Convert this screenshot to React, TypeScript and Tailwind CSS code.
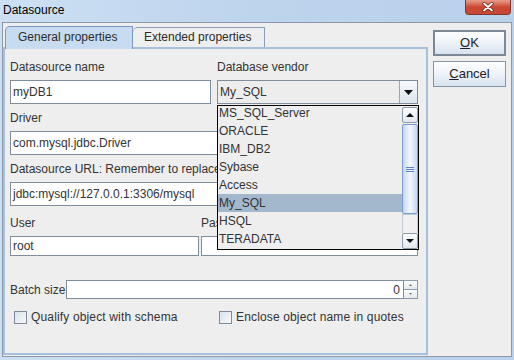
const vendors = [
  "MS_SQL_Server",
  "ORACLE",
  "IBM_DB2",
  "Sybase",
  "Access",
  "My_SQL",
  "HSQL",
  "TERADATA",
];

function Field({ value, h = "h-[24px]", className = "" }: { value: string; h?: string; className?: string }) {
  return (
    <div
      className={`${h} ${className} border border-[#7f8d9c] bg-white pl-[2px] flex items-center overflow-hidden whitespace-nowrap`}
    >
      {value}
    </div>
  );
}

function Label({ children }: { children: React.ReactNode }) {
  return <div className="h-[16px] leading-[16px] mb-[5px] whitespace-nowrap">{children}</div>;
}

function Check({ label }: { label: string }) {
  return (
    <div className="flex items-center gap-[4px]">
      <div className="w-[13px] h-[13px] border border-[#7d8b9a] bg-gradient-to-br from-[#dbe3ec] to-[#f6f8fb]" />
      <span className="tracking-[0.15px]">{label}</span>
    </div>
  );
}

function VendorCombo() {
  return (
    <div className="relative w-[201px]">
      <div className="h-[24px] border border-[#7f8d9c] bg-[#ededed] flex">
        <div className="flex-1 pl-[2px] flex items-center">My_SQL</div>
        <div className="w-[18px] border-l border-[#9aa6b3] bg-gradient-to-b from-[#f7f9fc] to-[#dde5ee] flex items-center justify-center">
          <svg width="9" height="5" viewBox="0 0 9 5">
            <polygon points="0,0 9,0 4.5,5" fill="#111" />
          </svg>
        </div>
      </div>

      {/* open popup list */}
      <div className="absolute left-0 top-[25px] z-20 w-[202px] h-[145px] border border-black bg-[#eeeeee] flex">
        <div className="flex-1 overflow-hidden">
          <div className="-mt-[2px]">
            {vendors.map((v) => (
              <div
                key={v}
                className={`h-[18px] leading-[18px] pl-[1px] ${v === "My_SQL" ? "bg-[#a3b8cc]" : ""}`}
              >
                {v}
              </div>
            ))}
          </div>
        </div>
        <div className="w-[16px] flex flex-col">
          <div className="h-[16px] mt-[1px] border border-[#8e9bab] rounded-[2px] bg-gradient-to-b from-[#fbfcfd] to-[#e3e8ee] flex items-center justify-center">
            <svg width="8" height="4" viewBox="0 0 8 4">
              <polygon points="0,4 8,4 4,0" fill="#111" />
            </svg>
          </div>
          <div className="h-[90px] mt-[1px] border border-[#7b9ad0] rounded-[2px] bg-gradient-to-r from-[#c3d6ef] via-[#f4f8fd] to-[#c6d9f1] flex flex-col items-center justify-center gap-[1px]">
            <div className="w-[8px] h-[1px] bg-[#5b80c4]" />
            <div className="w-[8px] h-[1px] bg-[#5b80c4]" />
            <div className="w-[8px] h-[1px] bg-[#5b80c4]" />
          </div>
          <div className="flex-1 border border-[#c2c9d2] border-b-0 bg-[#f0f0f0]" />
          <div className="h-[16px] border border-[#8e9bab] rounded-[2px] bg-gradient-to-b from-[#fbfcfd] to-[#e3e8ee] flex items-center justify-center">
            <svg width="8" height="4" viewBox="0 0 8 4">
              <polygon points="0,0 8,0 4,4" fill="#111" />
            </svg>
          </div>
        </div>
      </div>
    </div>
  );
}

function DialogButton({ children, focused }: { children: React.ReactNode; focused?: boolean }) {
  return (
    <div
      className={`w-[73px] h-[26px] flex items-center justify-center text-[13px] text-[#222] bg-gradient-to-b from-[#fdfeff] via-[#eef3f9] to-[#d7e2ef] ${
        focused ? "border-2 border-[#7c8896]" : "border border-[#8794a3]"
      }`}
    >
      {children}
    </div>
  );
}

export default function App() {
  return (
    <div className="w-[514px] h-[360px] overflow-hidden flex flex-col bg-gradient-to-r from-[#cde0f3] via-[#bdd4ed] to-[#b9d1eb] font-['Liberation_Sans',Arial,sans-serif] text-[12px] text-[#333333]">
      {/* title bar */}
      <div className="h-[22px] shrink-0 flex items-start justify-between">
        <span className="pl-[3px] pt-[3px] leading-[15px] text-black">Datasource</span>
        <div className="mr-[3px] w-[46px] h-[15px] rounded-b-[4px] border border-t-0 border-[#83362c] bg-gradient-to-b from-[#e79d8c] via-[#cc4732] to-[#c44a35] flex items-center justify-center">
          <svg width="12" height="10" viewBox="0 0 12 10">
            <path d="M2 1.5 L10 8.5 M10 1.5 L2 8.5" stroke="#5b1e16" strokeWidth="3.2" strokeLinecap="round" />
            <path d="M2 1.5 L10 8.5 M10 1.5 L2 8.5" stroke="#ffffff" strokeWidth="1.8" strokeLinecap="round" />
          </svg>
        </div>
      </div>

      {/* dialog body */}
      <div className="ml-[2px] w-[510px] h-[335px] border border-[#8d99a7] bg-[#eeeeee] flex">
        <div className="w-[425px] flex flex-col">
          {/* tabs */}
          <div className="h-[24px] shrink-0 pl-[2px] flex items-end relative z-10">
            <div className="h-[23px] -mb-[2px] w-[128px] rounded-tl-[5px] border border-b-0 border-[#7c97bf] bg-[#c7dbf1] pl-[12px] pt-[2px] leading-[16px] text-[#2b2b2b]">
              General properties
            </div>
            <div className="h-[20px] w-[132px] rounded-tl-[5px] border border-b-0 border-l-0 border-[#8a9db7] bg-[#eeeeee] pl-[11px] pt-[1px] leading-[16px] text-[#2b2b2b]">
              Extended properties
            </div>
          </div>

          {/* tab panel */}
          <div className="flex-1 mb-[1px] border-2 border-[#a9c0dd] pl-[5px] pt-[10px]">
            <div className="w-[408px] flex gap-[6px]">
              <div className="w-[201px]">
                <Label>Datasource name</Label>
                <Field value="myDB1" />
              </div>
              <div className="w-[201px]">
                <Label>Database vendor</Label>
                <VendorCombo />
              </div>
            </div>

            <div className="w-[408px] mt-[6px]">
              <Label>Driver</Label>
              <Field value="com.mysql.jdbc.Driver" />
            </div>

            <div className="w-[408px] mt-[6px]">
              <Label>Datasource URL: Remember to replace host, port and database name</Label>
              <Field value="jdbc:mysql://127.0.0.1:3306/mysql" />
            </div>

            <div className="w-[408px] mt-[9px] flex gap-[2px]">
              <div className="w-[189px]">
                <Label>User</Label>
                <Field value="root" h="h-[20px]" />
              </div>
              <div className="w-[217px]">
                <Label>Password</Label>
                <Field value="" h="h-[20px]" />
              </div>
            </div>

            <div className="w-[408px] mt-[24px] h-[19px] flex items-center">
              <span className="w-[56px] whitespace-nowrap">Batch size</span>
              <div className="flex-1 h-[19px] border border-[#7f8d9c] bg-white pr-[3px] flex items-center justify-end">
                0
              </div>
              <div className="w-[14px] h-[19px] flex flex-col">
                <div className="h-[10px] border border-l-0 border-[#8e9bab] bg-gradient-to-b from-[#fbfcfd] to-[#e4e9ef] flex items-center justify-center">
                  <svg width="3" height="2" viewBox="0 0 3 2">
                    <polygon points="0,2 3,2 1.5,0" fill="#777" />
                  </svg>
                </div>
                <div className="h-[9px] border border-t-0 border-l-0 border-[#8e9bab] bg-gradient-to-b from-[#fbfcfd] to-[#e4e9ef] flex items-center justify-center">
                  <svg width="3" height="2" viewBox="0 0 3 2">
                    <polygon points="0,0 3,0 1.5,2" fill="#777" />
                  </svg>
                </div>
              </div>
            </div>

            <div className="mt-[8px] h-[20px] flex items-center">
              <div className="w-[209px] pl-[4px]">
                <Check label="Qualify object with schema" />
              </div>
              <Check label="Enclose object name in quotes" />
            </div>
          </div>
        </div>

        {/* buttons */}
        <div className="flex-1 pl-[5px] pt-[7px] flex flex-col gap-[5px]">
          <DialogButton focused>
            <span className="underline">O</span>K
          </DialogButton>
          <DialogButton>
            <span className="underline">C</span>ancel
          </DialogButton>
        </div>
      </div>
    </div>
  );
}
